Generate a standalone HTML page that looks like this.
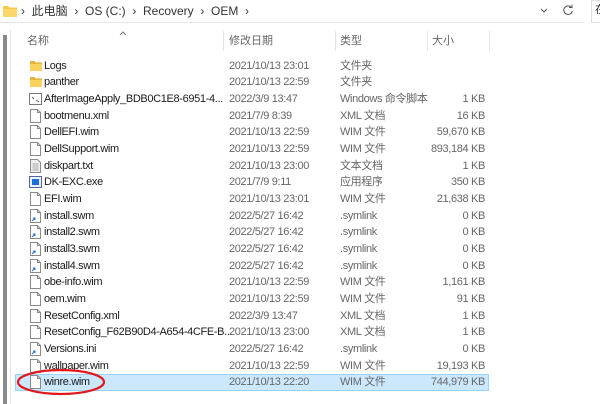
<!DOCTYPE html>
<html><head><meta charset="utf-8">
<style>
*{margin:0;padding:0;box-sizing:border-box}
body{width:600px;height:404px;background:#fff;overflow:hidden;position:relative;font-family:"Liberation Sans","Noto Sans CJK SC",sans-serif;font-size:11px;line-height:13px;color:#1a1a1a}
.a{position:absolute;white-space:nowrap}
.g{color:#666}
.row{position:absolute;left:15px;width:474px;height:17px}
.row span{position:absolute;top:2px;white-space:nowrap;line-height:13px;letter-spacing:-0.35px}
.sel{background:#cce8ff;box-shadow:inset 0 0 0 1px #99d1ff}
</style></head><body>
<div class="a" style="left:0;top:0;width:583px;height:23px;border-bottom:1px solid #e5e5e5"></div>
<svg class="a" style="left:3px;top:5px" width="14" height="12"><path d="M0 1h5l1.5 1.5H14V12H0z" fill="#f8c94a"/><path d="M0 4h14v8H0z" fill="#fcd86b"/></svg>
<div class="a" style="left:21px;top:4px;font-size:12px;color:#333;line-height:14px">›&nbsp;&nbsp;此电脑&nbsp;&nbsp;›&nbsp;&nbsp;OS (C:)&nbsp;&nbsp;›&nbsp;&nbsp;Recovery&nbsp;&nbsp;›&nbsp;&nbsp;OEM&nbsp;&nbsp;›</div>
<svg class="a" style="left:540px;top:8px" width="8" height="6"><path d="M1 1l3 3 3-3" stroke="#555" fill="none"/></svg>
<svg class="a" style="left:562px;top:4px" width="12" height="12"><path d="M9.5 3.5A4.3 4.3 0 1 0 10.3 7" stroke="#555" fill="none"/><path d="M7 3.5h3v-3" stroke="#555" fill="none"/></svg>
<div class="a" style="left:591px;top:0;width:20px;height:23px;border:1px solid #e0e0e0"></div>
<div class="a" style="left:595px;top:4px;color:#333">在</div>
<div class="a" style="left:3px;top:35px;width:4px;height:369px;background:#8a8a8a"></div>
<div class="a" style="left:10px;top:30px;width:1px;height:374px;background:#e6e6e6"></div>
<svg class="a" style="left:119px;top:31px" width="8" height="5"><path d="M1 4l3-3 3 3" stroke="#777" fill="none"/></svg>
<div class="a g" style="left:27px;top:35px">名称</div>
<div class="a" style="left:223px;top:31px;width:1px;height:20px;background:#e5e5e5"></div>
<div class="a g" style="left:229px;top:35px">修改日期</div>
<div class="a" style="left:335px;top:31px;width:1px;height:20px;background:#e5e5e5"></div>
<div class="a g" style="left:340px;top:35px">类型</div>
<div class="a" style="left:427px;top:31px;width:1px;height:20px;background:#e5e5e5"></div>
<div class="a g" style="left:432px;top:35px">大小</div>
<div class="a" style="left:489px;top:31px;width:1px;height:20px;background:#e5e5e5"></div>
<svg width="0" height="0" style="position:absolute"><defs>
<symbol id="fo" viewBox="0 0 12 10"><path d="M0 0h4.5l1.5 1.5H12V10H0z" fill="#e8b33a"/><path d="M0 3h12v7H0z" fill="#fcd25f"/></symbol>
<symbol id="fi" viewBox="0 0 11 14"><path d="M.5.5h7l3 3v10H.5z" fill="#fff" stroke="#8a8a8a"/><path d="M7.5.5v3h3" fill="none" stroke="#8a8a8a"/></symbol>
<symbol id="ln" viewBox="0 0 11 14"><path d="M.5.5h7l3 3v10H.5z" fill="#fff" stroke="#8a8a8a"/><path d="M7.5.5v3h3" fill="none" stroke="#8a8a8a"/><path d="M2 12l3-3M3 9h2v2" stroke="#1f6fd1" fill="none"/></symbol>
<symbol id="bt" viewBox="0 0 13 12"><rect x=".5" y=".5" width="12" height="11" fill="#fff" stroke="#777"/><path d="M3 4l2 2M7 7l3 2" stroke="#666"/></symbol>
<symbol id="tx" viewBox="0 0 11 14"><path d="M.5.5h7l3 3v10H.5z" fill="#eee" stroke="#8a8a8a"/><path d="M2.5 5h6M2.5 7h6M2.5 9h6M2.5 11h6" stroke="#aaa"/></symbol>
<symbol id="ex" viewBox="0 0 13 12"><rect x=".5" y=".5" width="12" height="11" fill="#eef" stroke="#4a6a9a"/><rect x="3" y="3" width="7" height="6" fill="#1e6fd9"/></symbol>
</defs></svg>
<div id="rows"></div>
<script>
var d=[["fo","Logs","2021/10/13 23:01","文件夹",""],["fo","panther","2021/10/13 22:59","文件夹",""],["bt","AfterImageApply_BDB0C1E8-6951-4...","2022/3/9 13:47","Windows 命令脚本","1 KB"],["fi","bootmenu.xml","2021/7/9 8:39","XML 文档","16 KB"],["fi","DellEFI.wim","2021/10/13 22:59","WIM 文件","59,670 KB"],["fi","DellSupport.wim","2021/10/13 22:59","WIM 文件","893,184 KB"],["tx","diskpart.txt","2021/10/13 23:00","文本文档","1 KB"],["ex","DK-EXC.exe","2021/7/9 9:11","应用程序","350 KB"],["fi","EFI.wim","2021/10/13 23:01","WIM 文件","21,638 KB"],["ln","install.swm","2022/5/27 16:42",".symlink","0 KB"],["ln","install2.swm","2022/5/27 16:42",".symlink","0 KB"],["ln","install3.swm","2022/5/27 16:42",".symlink","0 KB"],["ln","install4.swm","2022/5/27 16:42",".symlink","0 KB"],["fi","obe-info.wim","2021/10/13 22:59","WIM 文件","1,161 KB"],["fi","oem.wim","2021/10/13 22:59","WIM 文件","91 KB"],["fi","ResetConfig.xml","2022/3/9 13:47","XML 文档","1 KB"],["fi","ResetConfig_F62B90D4-A654-4CFE-B...","2021/10/13 23:00","XML 文档","1 KB"],["ln","Versions.ini","2022/5/27 16:42",".symlink","0 KB"],["fi","wallpaper.wim","2021/10/13 22:59","WIM 文件","19,193 KB"],["fi","winre.wim","2021/10/13 22:20","WIM 文件","744,979 KB"]];
var h="";
d.forEach(function(r,i){var y=Math.round(57.5+i*16.68);
var w=(r[0]=="fo")?'<svg style="position:absolute;left:15px;top:3px" width="12" height="10"><use href="#fo"/></svg>':(r[0]=="bt"||r[0]=="ex")?'<svg style="position:absolute;left:14px;top:2px" width="13" height="12"><use href="#'+r[0]+'"/></svg>':'<svg style="position:absolute;left:15px;top:1px" width="11" height="14"><use href="#'+r[0]+'"/></svg>';
h+='<div class="row'+(i==19?' sel':'')+'" style="top:'+y+'px">'+w+'<span style="left:29px">'+r[1]+'</span><span class="g" style="left:214px">'+r[2]+'</span><span class="g" style="left:325px">'+r[3]+'</span><span class="g" style="right:4px">'+r[4]+'</span></div>';});
document.getElementById("rows").innerHTML=h;
</script>
<svg class="a" style="left:15px;top:367px" width="94" height="30"><ellipse cx="46" cy="15" rx="43" ry="12" fill="none" stroke="#e0191d" stroke-width="2.2"/></svg>
</body></html>
